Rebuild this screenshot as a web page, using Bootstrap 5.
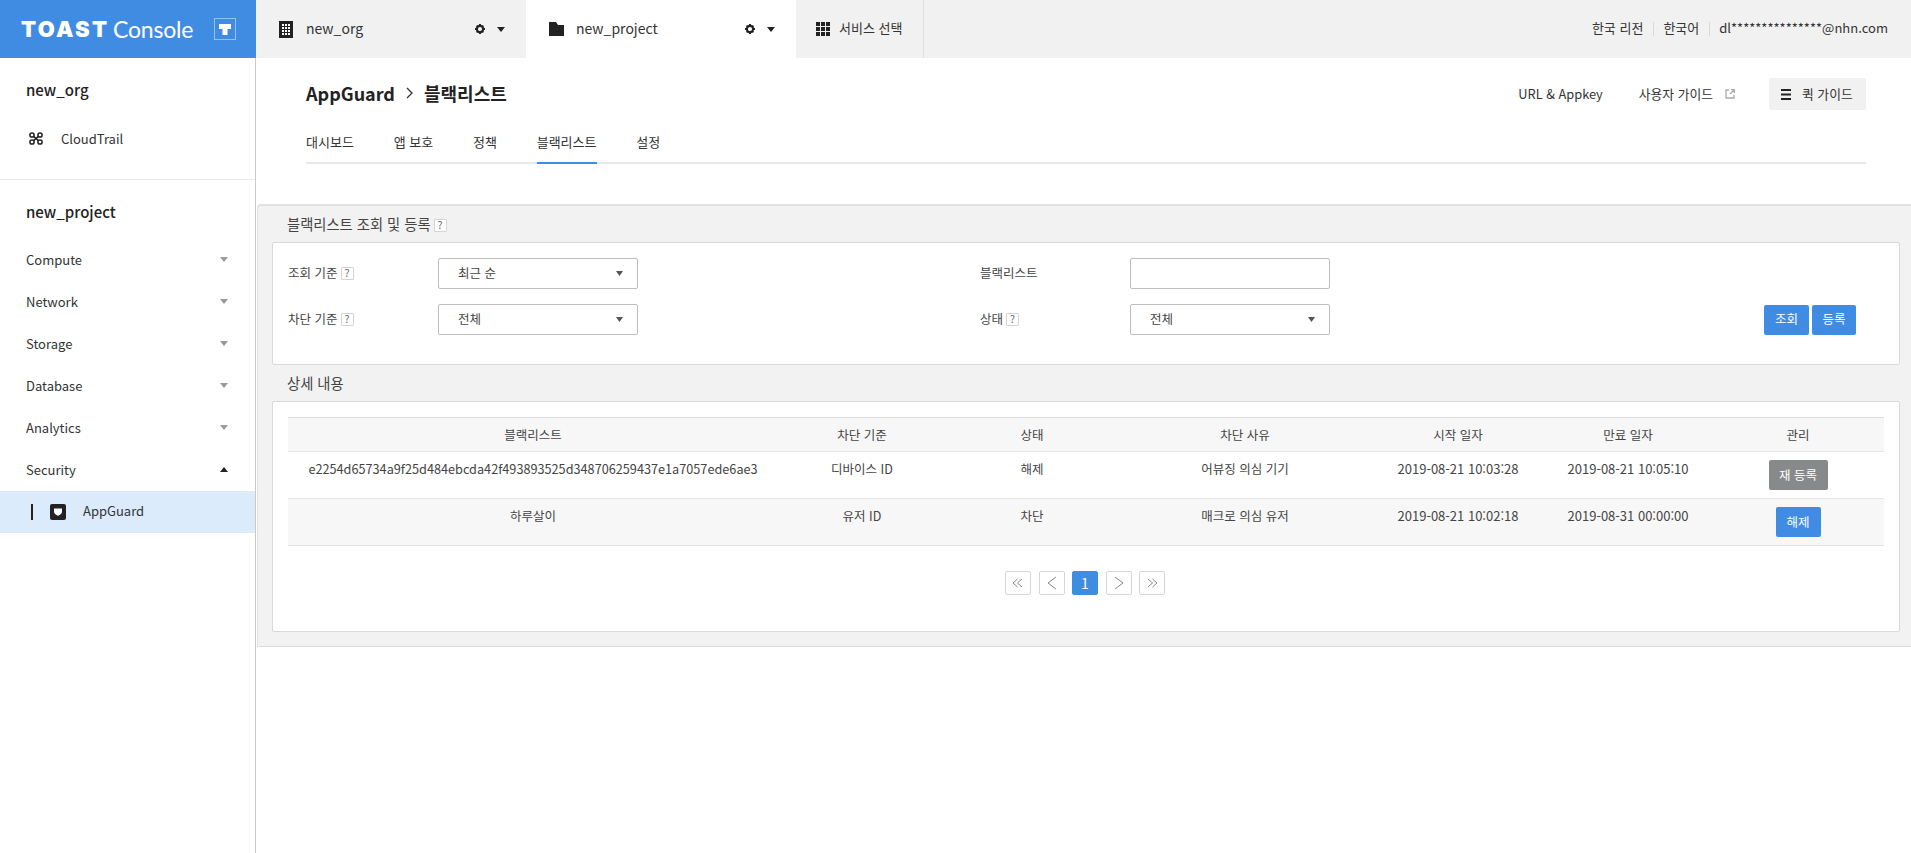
<!DOCTYPE html>
<html lang="ko">
<head>
<meta charset="utf-8">
<title>AppGuard</title>
<link href="https://cdn.jsdelivr.net/npm/bootstrap@5.3.0/dist/css/bootstrap.min.css" rel="stylesheet">
<style>
html,body{height:100%;}
body{font-family:"Noto Sans CJK KR","Noto Sans",sans-serif;color:#333;font-size:13px;overflow:hidden;background:#fff;}
.page-shell{height:853px;}
.topbar{height:58px;background:#f1f1f1;}
.brand-cell{width:256px;background:#418ce3;color:#fff;padding-left:21px;}
.brand-toast{font-family:Inter,sans-serif;font-weight:900;font-size:22px;letter-spacing:2.3px;line-height:1;width:92px;white-space:nowrap;}
.brand-console{font-family:Lato,sans-serif;font-weight:400;font-size:23px;line-height:1;letter-spacing:-.2px;}
.brand-mark{width:22px;height:22px;border:1px solid rgba(255,255,255,.45);margin-left:21px;}
.org-tab{width:270px;padding-left:23px;padding-right:21px;font-size:14px;color:#333;}
.org-tab.on{background:#fff;}
.org-name{margin-left:13px;padding-bottom:2px;}
.org-tab.on .org-name{margin-left:12px;}
.svc-tab{width:128px;padding-left:20px;border-right:1px solid #dfdfdf;}
.svc-label{margin-left:9px;font-size:13px;padding-bottom:2px;}
.top-links{padding-right:23px;font-size:13px;gap:9.5px;}
.top-links span{padding-bottom:2px;}
.top-sep{width:1px;height:14px;background:#d8d8d8;}
.cog-gap{margin-right:12px;}
.sidebar{width:256px;border-right:1px solid #c9c9c9;flex-shrink:0;}
.side-head{height:42px;line-height:40px;padding-left:26px;font-size:15px;color:#222;font-weight:500;}
.head-org{margin-top:12px;}
.head-proj{margin-top:11px;margin-bottom:6px;line-height:42px;}
.side-item{height:42px;padding:0 27px 1px 26px;font-size:13px;color:#333;}
.side-item.trail{margin-top:6px;margin-bottom:19px;padding-left:29px;}
.trail svg{margin-right:18px;}
.side-item.sub{background:#dcebfb;padding-left:31px;padding-bottom:0;}
.sub-text{margin-left:17px;padding-bottom:2px;}
.side-rule{border-top:1px solid #e9e9e9;}
.tick{width:2px;height:16px;background:#222;margin-right:17px;}
.content-area{min-width:0;}
.page-head{padding:20px 45px 0 50px;}
.title-row{height:32px;}
.page-title{font-size:18px;font-weight:700;color:#222;padding-bottom:2px;}
.crumb-gt{margin:0 11px;}
.head-link{font-size:12.8px;color:#333;}
.link-guide{margin-left:36px;}
.link-guide svg{margin-left:12px;}
.quick-btn{width:97px;height:32px;background:#f1f1f1;border:0;border-radius:2px;font-size:12.8px;color:#333;padding:0 0 0 12px;margin-left:34px;}
.quick-btn span{margin-left:11px;}
.subnav{margin-top:16px;gap:39.8px;border-bottom:2px solid #e8e8e8;}
.subnav a{display:block;padding:6px 0 10px;line-height:20px;color:#333;text-decoration:none;font-size:13px;margin-bottom:-2px;border-bottom:2px solid transparent;}
.subnav a.on{border-bottom-color:#418ce3;}
.work-panel{margin:40px 0 0 1px;background:#f2f2f2;border-top:2px solid #e2e2e2;border-bottom:1px solid #dcdcdc;border-left:1px solid #e2e2e2;border-top-left-radius:4px;padding:0 11px 0 14px;height:443px;}
.panel-heading{height:36px;line-height:36px;padding-left:15px;font-size:14.3px;color:#444;}
.white-box{background:#fff;border:1px solid #d9d9d9;border-radius:2px;}
.query-box{height:123px;padding:15px 43px 0 15px;}
.query-row{height:31px;margin-bottom:15px;}
.field-label{width:150px;font-size:12.5px;color:#444;}
.wide-gap{margin-left:342px;}
.query-ctl{width:200px;height:31px;border:1px solid #bdbdbd;border-radius:2px;font-size:12.5px;color:#444;padding:0 0 0 19px;box-shadow:none;font-family:inherit;}
select.query-ctl{background-image:url("data:image/svg+xml,%3Csvg xmlns='http://www.w3.org/2000/svg' width='8' height='5'%3E%3Cpath d='M0 0h8L4 5z' fill='%23555'/%3E%3C/svg%3E");background-size:7px 5px;background-position:right 14px center;}
.hint-box{display:inline-flex;width:13px;height:13px;border:1px solid #d4d4d4;border-radius:1px;font-size:10.5px;line-height:1;color:#666;align-items:center;justify-content:center;margin-left:3px;background:#fff;vertical-align:1px;}
.tone-btn{height:30px;padding:0;font-size:12.5px;border-radius:2px;color:#fff;border:0;}
.tone-btn:hover{color:#fff;}
.tone-blue{background:#418ce3;}
.tone-blue:hover{background:#418ce3;}
.tone-gray{background:#88898b;}
.tone-gray:hover{background:#88898b;}
.w44{width:44px;}.w45{width:45px;}.w60{width:59px;}
.btn-pair{gap:3px;}
.detail-box{height:231px;padding:15px 15px 0 15px;}
.detail-table{table-layout:fixed;width:100%;margin:0;font-size:12.5px;border-top:1px solid #dcdcdc;}
.detail-table th,.detail-table td{text-align:center;vertical-align:top;border-bottom:1px solid #e4e4e4;padding:7px 0 0;line-height:20px;color:#444;font-weight:400;background:transparent;box-shadow:none;}
.detail-table th{height:34px;background:#f7f7f7;}
.detail-table td{height:47px;}
.detail-table td.hash-cell{font-size:12.7px;}
.detail-table td.date-cell{font-size:13px;}
.detail-table tr.alt td{background:#f7f7f7;}
.detail-table .tone-btn{margin-top:1px;display:block;margin-left:auto;margin-right:auto;}
.col-a{width:490px;}.col-b{width:168px;}.col-c{width:172px;}.col-d{width:254px;}.col-e{width:172px;}.col-f{width:168px;}.col-g{width:172px;}
.pager{margin:25px 2px 0 0;gap:7.5px;}
.pager .page-item .page-link{width:26px;height:24px;border:1px solid #d6d6d6;border-radius:2px;color:#888;display:flex;align-items:center;justify-content:center;background:#fff;font-size:14px;text-decoration:none;padding:0;margin:0;}
.pager .page-item.now .page-link{background:#418ce3;border-color:#418ce3;color:#fff;}
</style>
</head>
<body>
<div class="page-shell d-flex flex-column">
  <header class="topbar d-flex flex-shrink-0">
    <div class="brand-cell d-flex align-items-center">
      <span class="brand-toast">TOAST</span><span class="brand-console">Console</span>
      <span class="brand-mark d-flex align-items-center justify-content-center">
        <svg width="14" height="14" viewBox="0 0 14 14"><path d="M1 2h12v5H9.500v6h-5V7H1z" fill="#fff"/></svg>
      </span>
    </div>
    <div class="org-tab d-flex align-items-center">
      <svg width="14" height="17" viewBox="0 0 14 17"><rect width="14" height="17" fill="#222"/><g fill="#fff"><rect x="3" y="3" width="2" height="2"/><rect x="6" y="3" width="2" height="2"/><rect x="9" y="3" width="2" height="2"/><rect x="3" y="6" width="2" height="2"/><rect x="6" y="6" width="2" height="2"/><rect x="9" y="6" width="2" height="2"/><rect x="3" y="9" width="2" height="2"/><rect x="6" y="9" width="2" height="2"/><rect x="9" y="9" width="2" height="2"/><rect x="3" y="12" width="2" height="2"/><rect x="6" y="12" width="2" height="2"/><rect x="9" y="12" width="2" height="2"/></g></svg>
      <span class="org-name me-auto">new_org</span>
      <svg class="cog-gap" width="10" height="10" viewBox="0 0 10 10"><circle cx="5" cy="5" r="3.100" fill="none" stroke="#222" stroke-width="2.100"/><path d="M4 0h2v1.500H4zM4 8.500h2V10H4zM0 4h1.500v2H0zM8.500 4H10v2H8.500zM1 2.200 2.200 1l1 1L2 3.200zM7.800 1 9 2.200l-1 1L6.800 2zM1 7.800 2 6.800 3.200 8l-1 1zM8 6.800l1 1L7.800 9l-1-1z" fill="#222"/></svg>
      <svg width="8" height="5" viewBox="0 0 8 5"><path d="M0 0h8L4 5z" fill="#222"/></svg>
    </div>
    <div class="org-tab on d-flex align-items-center">
      <svg width="15" height="14" viewBox="0 0 15 14"><path d="M0 0h7l2 3h6v11H0z" fill="#222"/></svg>
      <span class="org-name me-auto">new_project</span>
      <svg class="cog-gap" width="10" height="10" viewBox="0 0 10 10"><circle cx="5" cy="5" r="3.100" fill="none" stroke="#222" stroke-width="2.100"/><path d="M4 0h2v1.500H4zM4 8.500h2V10H4zM0 4h1.500v2H0zM8.500 4H10v2H8.500zM1 2.200 2.200 1l1 1L2 3.200zM7.800 1 9 2.200l-1 1L6.800 2zM1 7.800 2 6.800 3.200 8l-1 1zM8 6.800l1 1L7.800 9l-1-1z" fill="#222"/></svg>
      <svg width="8" height="5" viewBox="0 0 8 5"><path d="M0 0h8L4 5z" fill="#222"/></svg>
    </div>
    <div class="svc-tab d-flex align-items-center">
      <svg width="14" height="14" viewBox="0 0 14 14" fill="#222"><rect width="4" height="4"/><rect x="5" width="4" height="4"/><rect x="10" width="4" height="4"/><rect y="5" width="4" height="4"/><rect x="5" y="5" width="4" height="4"/><rect x="10" y="5" width="4" height="4"/><rect y="10" width="4" height="4"/><rect x="5" y="10" width="4" height="4"/><rect x="10" y="10" width="4" height="4"/></svg>
      <span class="svc-label">서비스 선택</span>
    </div>
    <div class="top-links d-flex align-items-center ms-auto">
      <span>한국 리전</span><i class="top-sep"></i><span>한국어</span><i class="top-sep"></i><span>dl***************@nhn.com</span>
    </div>
  </header>
  <div class="d-flex flex-grow-1">
    <aside class="sidebar">
      <div class="side-head head-org">new_org</div>
      <div class="side-item trail d-flex align-items-center">
        <svg width="14" height="13" viewBox="0 0 14 13" fill="none" stroke="#222" stroke-width="1.500"><circle cx="3" cy="3" r="2.100"/><circle cx="11" cy="3" r="2.100"/><circle cx="3" cy="10" r="2.100"/><circle cx="11" cy="10" r="2.100"/><path d="M4.600 4.400 9.400 8.600M4.600 8.600 9.400 4.400"/></svg>
        <span>CloudTrail</span>
      </div>
      <div class="side-rule"></div>
      <div class="side-head head-proj">new_project</div>
      <div class="side-item d-flex align-items-center justify-content-between"><span>Compute</span><svg width="8" height="5" viewBox="0 0 8 5"><path d="M0 0h8L4 5z" fill="#999"/></svg></div>
      <div class="side-item d-flex align-items-center justify-content-between"><span>Network</span><svg width="8" height="5" viewBox="0 0 8 5"><path d="M0 0h8L4 5z" fill="#999"/></svg></div>
      <div class="side-item d-flex align-items-center justify-content-between"><span>Storage</span><svg width="8" height="5" viewBox="0 0 8 5"><path d="M0 0h8L4 5z" fill="#999"/></svg></div>
      <div class="side-item d-flex align-items-center justify-content-between"><span>Database</span><svg width="8" height="5" viewBox="0 0 8 5"><path d="M0 0h8L4 5z" fill="#999"/></svg></div>
      <div class="side-item d-flex align-items-center justify-content-between"><span>Analytics</span><svg width="8" height="5" viewBox="0 0 8 5"><path d="M0 0h8L4 5z" fill="#999"/></svg></div>
      <div class="side-item d-flex align-items-center justify-content-between"><span>Security</span><svg width="8" height="5" viewBox="0 0 8 5"><path d="M0 5h8L4 0z" fill="#222"/></svg></div>
      <div class="side-item sub d-flex align-items-center">
        <i class="tick"></i>
        <svg width="16" height="16" viewBox="0 0 16 16"><rect width="16" height="16" rx="2" fill="#222"/><path d="M4 4.500h8v3.500c0 1.500-1.700 2.700-4 3.700-2.300-1-4-2.200-4-3.700z" fill="#fff"/></svg>
        <span class="sub-text">AppGuard</span>
      </div>
    </aside>
    <main class="content-area flex-grow-1">
      <div class="page-head">
        <div class="title-row d-flex align-items-center">
          <div class="page-title d-flex align-items-center">AppGuard<svg class="crumb-gt" width="7" height="12" viewBox="0 0 7 12" fill="none" stroke="#333" stroke-width="1.300"><path d="M1 1l5 5-5 5"/></svg>블랙리스트</div>
          <span class="head-link ms-auto">URL &amp; Appkey</span>
          <span class="head-link link-guide d-flex align-items-center">사용자 가이드<svg width="10" height="10" viewBox="0 0 10 10" fill="none" stroke="#aaa" stroke-width="1.300"><path d="M4 1H1v8h8V6M5 5l4-4M6 .7h3.300V4"/></svg></span>
          <button type="button" class="quick-btn btn d-flex align-items-center">
            <svg width="10" height="11" viewBox="0 0 10 11" fill="#222"><rect width="10" height="2"/><rect y="4.500" width="10" height="2"/><rect y="9" width="10" height="2"/></svg>
            <span>퀵 가이드</span>
          </button>
        </div>
        <nav class="subnav d-flex">
          <a href="#">대시보드</a><a href="#">앱 보호</a><a href="#">정책</a><a href="#" class="on">블랙리스트</a><a href="#">설정</a>
        </nav>
      </div>
      <section class="work-panel">
        <div class="panel-heading">블랙리스트 조회 및 등록<span class="hint-box">?</span></div>
        <div class="white-box query-box">
          <div class="query-row d-flex align-items-center">
            <span class="field-label">조회 기준<span class="hint-box">?</span></span>
            <select class="form-select query-ctl"><option>최근 순</option></select>
            <span class="field-label wide-gap">블랙리스트</span>
            <input type="text" class="form-control query-ctl">
          </div>
          <div class="query-row d-flex align-items-center">
            <span class="field-label">차단 기준<span class="hint-box">?</span></span>
            <select class="form-select query-ctl"><option>전체</option></select>
            <span class="field-label wide-gap">상태<span class="hint-box">?</span></span>
            <select class="form-select query-ctl"><option>전체</option></select>
            <div class="btn-pair d-flex ms-auto">
              <button type="button" class="btn tone-btn tone-blue w45">조회</button>
              <button type="button" class="btn tone-btn tone-blue w44">등록</button>
            </div>
          </div>
        </div>
        <div class="panel-heading">상세 내용</div>
        <div class="white-box detail-box">
          <table class="table detail-table">
            <colgroup><col class="col-a"><col class="col-b"><col class="col-c"><col class="col-d"><col class="col-e"><col class="col-f"><col class="col-g"></colgroup>
            <thead><tr><th>블랙리스트</th><th>차단 기준</th><th>상태</th><th>차단 사유</th><th>시작 일자</th><th>만료 일자</th><th>관리</th></tr></thead>
            <tbody>
              <tr><td class="hash-cell">e2254d65734a9f25d484ebcda42f493893525d348706259437e1a7057ede6ae3</td><td>디바이스 ID</td><td>해제</td><td>어뷰징 의심 기기</td><td class="date-cell">2019-08-21 10:03:28</td><td class="date-cell">2019-08-21 10:05:10</td><td><button type="button" class="btn tone-btn tone-gray w60">재 등록</button></td></tr>
              <tr class="alt"><td>하루살이</td><td>유저 ID</td><td>차단</td><td>매크로 의심 유저</td><td class="date-cell">2019-08-21 10:02:18</td><td class="date-cell">2019-08-31 00:00:00</td><td><button type="button" class="btn tone-btn tone-blue w45">해제</button></td></tr>
            </tbody>
          </table>
          <ul class="pagination pager justify-content-center">
            <li class="page-item"><a class="page-link" href="#"><svg width="12" height="10" viewBox="0 0 12 10" fill="none" stroke="#888"><path d="M5.500 1 1 5l4.500 4M10 1 5.500 5l4.500 4"/></svg></a></li>
            <li class="page-item"><a class="page-link" href="#"><svg width="10" height="14" viewBox="0 0 10 14" fill="none" stroke="#888"><path d="M9 1 1 7l8 6"/></svg></a></li>
            <li class="page-item now"><a class="page-link" href="#">1</a></li>
            <li class="page-item"><a class="page-link" href="#"><svg width="10" height="14" viewBox="0 0 10 14" fill="none" stroke="#888"><path d="M1 1l8 6-8 6"/></svg></a></li>
            <li class="page-item"><a class="page-link" href="#"><svg width="12" height="10" viewBox="0 0 12 10" fill="none" stroke="#888"><path d="M2 1l4.500 4L2 9M6.500 1 11 5 6.500 9"/></svg></a></li>
          </ul>
        </div>
      </section>
    </main>
  </div>
</div>
<script src="https://cdn.jsdelivr.net/npm/bootstrap@5.3.0/dist/js/bootstrap.bundle.min.js"></script>
</body>
</html>
